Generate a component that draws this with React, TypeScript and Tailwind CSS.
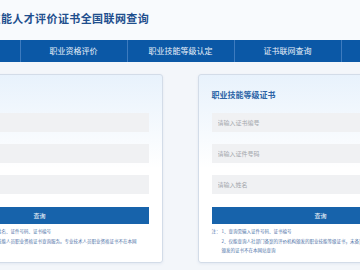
import React from "react";

const font = { fontFamily: '"Noto Sans CJK SC", "Noto Sans", sans-serif' };

function Card({
  title,
  notes,
}: {
  title: string;
  notes: string[];
}) {
  return (
    <div className="w-[246px] h-[189px] shrink-0 rounded-[3px] border border-[#d3dce8] bg-gradient-to-b from-[#e8f2fc] via-white to-white px-[13px] shadow-[0_1px_3px_rgba(40,80,140,0.08)]">
      <div className="mt-[16px] h-[8px] text-[8px] leading-[8px] font-bold text-[#2b64a6] whitespace-nowrap">
        {title}
      </div>
      <div className="mt-[14px] flex flex-col gap-[12px]">
        {["请输入证书编号", "请输入证件号码", "请输入姓名"].map((p) => (
          <input
            key={p}
            placeholder={p}
            className="block h-[19px] w-full bg-[#f0f1f3] pl-[6px] text-[6px] outline-none placeholder:text-[#a3a6ab]"
          />
        ))}
      </div>
      <button className="mt-[13px] block h-[17px] w-full bg-[#1763ab] text-[6px] text-white">
        查询
      </button>
      <div className="mt-[3px] flex text-[4.5px] leading-[9.5px] text-[#4f73a8] whitespace-nowrap">
        <span className="w-[10px] shrink-0">注：</span>
        <div className="flex flex-col">
          {notes.map((n, i) => (
            <span key={i}>{n}</span>
          ))}
        </div>
      </div>
    </div>
  );
}

export default function App() {
  const nav = ["首页", "职业资格评价", "职业技能等级认定", "证书联网查询", "政策文件"];
  return (
    <div
      className="w-[360px] h-[270px] overflow-hidden bg-[#f3f6fa] flex flex-col items-center"
      style={font}
    >
      <div className="w-[535px] shrink-0 h-[40px] bg-[#f8fafd]">
        <div className="pl-[77px] pt-[12px] text-[11px] leading-[12px] tracking-[0.4px] font-bold text-[#1f4f8e] whitespace-nowrap">
          技能人才评价证书全国联网查询
        </div>
      </div>
      <div className="w-[535px] shrink-0 h-[22px] bg-[#0b58a6] flex">
        {nav.map((n, i) => (
          <div
            key={n}
            className={
              "w-[107px] shrink-0 flex items-center justify-center text-[8px] text-[#eaf1fa] whitespace-nowrap " +
              (i > 0 ? "border-l border-[#3d7bbf]" : "")
            }
          >
            {i === 0 || i === 4 ? "" : n}
          </div>
        ))}
      </div>
      <div className="w-[535px] shrink-0 flex justify-center gap-[35px] pt-[12px]">
        <Card
          title="职业资格证书"
          notes={[
            "1、查询职业资格证书需输入姓名、证件号码、证书编号",
            "2、本网站仅提供水平评价类技能人员职业资格证书查询服务。专业技术人员职业资格证书不在本网",
            "站查询",
          ]}
        />
        <Card
          title="职业技能等级证书"
          notes={[
            "1、查询需输入证件号码、证书编号",
            "2、仅能查询人社部门备案的评价机构颁发的职业技能等级证书，未备案评价",
            "颁发的证书不在本网站查询",
          ]}
        />
      </div>
    </div>
  );
}
